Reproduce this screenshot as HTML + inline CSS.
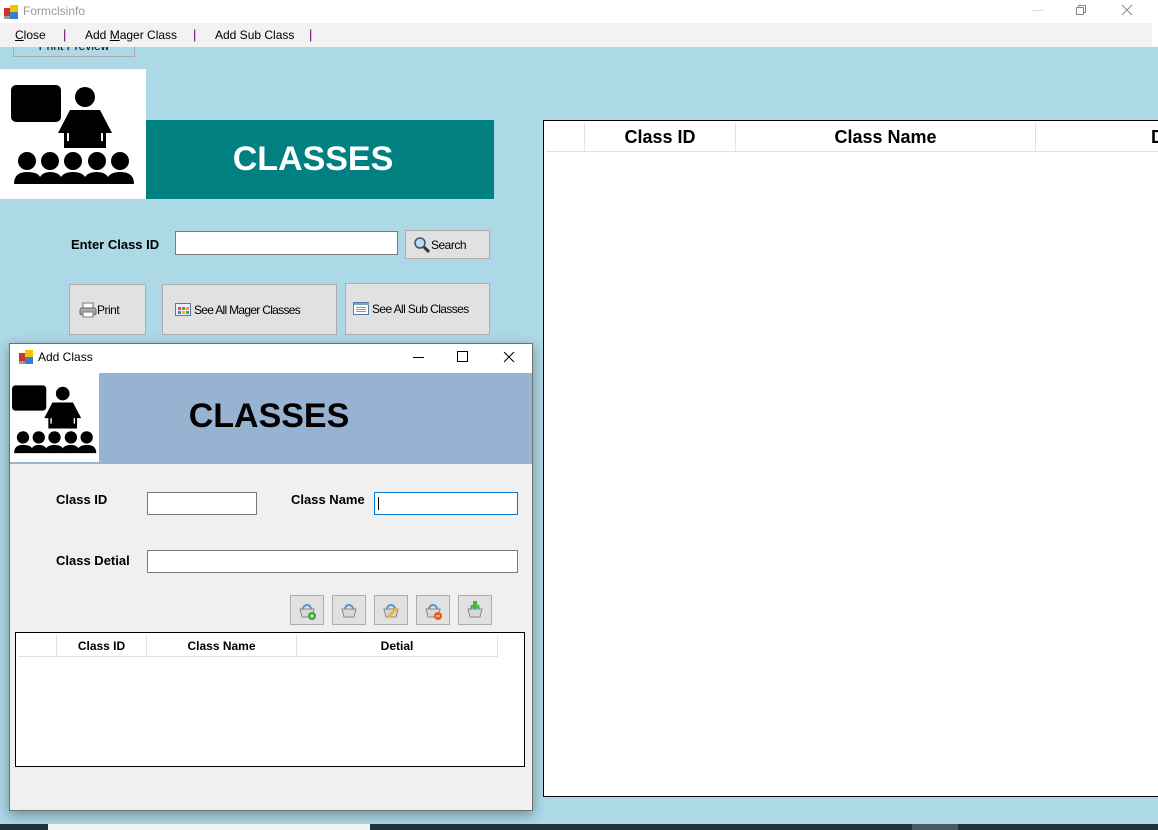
<!DOCTYPE html>
<html><head><meta charset="utf-8">
<style>
*{margin:0;padding:0;box-sizing:border-box}
body{width:1158px;height:830px;overflow:hidden;background:#add8e6;position:relative;font-family:"Liberation Sans",sans-serif}
.a{position:absolute}
.btn{position:absolute;background:#e1e1e1;border:1px solid #adadad;font-size:12px;color:#000;display:flex;align-items:center;letter-spacing:-0.5px}
.tb{position:absolute;background:#fff;border:1px solid #7a7a7a}
.lbl{position:absolute;font-weight:bold;font-size:13px;color:#000}
.hd{position:absolute;top:0;height:100%;border-right:1px solid #e3e3e3;font-weight:bold;display:flex;align-items:center;justify-content:center}
</style></head><body>
<svg width="0" height="0" style="position:absolute">
<defs>
<g id="ic">
<rect x="11" y="16" width="50" height="37" rx="5" fill="#000"/>
<circle cx="85" cy="28" r="10" fill="#000"/>
<path d="M70 41 H100 L112 64 H106 V79 H64 V64 H58 Z" fill="#000"/>
<path d="M68 64 V72 M102 64 V72" stroke="#fff" stroke-width="2"/>
<g fill="#000">
<circle cx="27" cy="92" r="9"/><circle cx="50" cy="92" r="9"/><circle cx="73" cy="92" r="9"/><circle cx="97" cy="92" r="9"/><circle cx="120" cy="92" r="9"/>
<path d="M14 115 Q14 103 27 103 Q38 103 40 108 Q43 103 50 103 Q58 103 61 108 Q64 103 73 103 Q82 103 85 108 Q88 103 97 103 Q105 103 108 108 Q111 103 120 103 Q134 103 134 115 Z"/>
</g>
</g>
<g id="bk"><path d="M3 9 H17 L15 17 H5 Z" fill="#d8d8d8" stroke="#888" stroke-width="1"/><path d="M6 9 A4 4 0 0 1 14 9" fill="none" stroke="#5a8fc8" stroke-width="2"/></g>
</defs></svg>

<!-- title bar -->
<div class="a" style="left:0;top:0;width:1158px;height:23px;background:#fff"></div>
<svg class="a" style="left:3px;top:4px" width="16" height="16"><rect x="1" y="4" width="7" height="8" fill="#c33"/><rect x="7" y="1" width="8" height="7" fill="#f5c400"/><rect x="7" y="8" width="8" height="7" fill="#3a7bd5"/><rect x="1" y="12" width="6" height="3" fill="#999"/></svg>
<div class="a" style="left:23px;top:4px;font-size:12px;color:#999">Formclsinfo</div>
<div class="a" style="left:1031px;top:10px;width:12px;height:1px;background:#ddd"></div>
<svg class="a" style="left:1075px;top:4px" width="12" height="12"><rect x="1.5" y="3.5" width="7" height="7" fill="none" stroke="#888"/><path d="M3.5 3.5 V1.5 H10.5 V8.5 H8.5" fill="none" stroke="#888"/></svg>
<svg class="a" style="left:1121px;top:4px" width="12" height="12"><path d="M1 1 L11 11 M11 1 L1 11" stroke="#888"/></svg>
<!-- menu -->
<div class="a" style="left:0;top:23px;width:1152px;height:24px;background:#f2f2f2"></div>
<div class="a" style="left:1152px;top:23px;width:6px;height:24px;background:#fff"></div>
<div class="a" style="left:13px;top:47px;width:122px;height:10px;border:1px solid #aaa;border-top:none;background:#add8e6;overflow:hidden"><div style="font-size:12px;margin-top:-8px;text-align:center">Print Preview</div></div>
<div class="a" style="left:15px;top:28px;font-size:12px"><u>C</u>lose</div>
<div class="a" style="left:63px;top:27px;font-size:13px;color:#606">|</div>
<div class="a" style="left:85px;top:28px;font-size:12px">Add <u>M</u>ager Class</div>
<div class="a" style="left:193px;top:27px;font-size:13px;color:#606">|</div>
<div class="a" style="left:215px;top:28px;font-size:12px">Add Sub Class</div>
<div class="a" style="left:309px;top:27px;font-size:13px;color:#606">|</div>

<!-- main header -->
<div class="a" style="left:0;top:69px;width:146px;height:130px;background:#fff"></div>
<svg class="a" style="left:0;top:69px" width="146" height="130" viewBox="0 0 146 130"><use href="#ic"/></svg>
<div class="a" style="left:146px;top:120px;width:348px;height:79px;background:#008080;color:#fff;font-weight:bold;font-size:34px;display:flex;align-items:center;justify-content:center;padding-right:14px">CLASSES</div>

<div class="lbl" style="left:71px;top:237px">Enter Class ID</div>
<div class="tb" style="left:175px;top:231px;width:223px;height:24px"></div>
<div class="btn" style="left:405px;top:230px;width:85px;height:29px;padding-left:7px"><svg width="18" height="18"><circle cx="7" cy="7" r="5" fill="#bde" stroke="#357" stroke-width="1.5"/><path d="M11 11 L16 16" stroke="#333" stroke-width="3"/></svg>Search</div>
<div class="btn" style="left:69px;top:284px;width:77px;height:51px;padding-left:9px"><svg width="18" height="16"><rect x="4" y="1" width="10" height="6" fill="#fff" stroke="#777"/><rect x="1" y="6" width="16" height="7" rx="2" fill="#aaa" stroke="#666"/><rect x="4" y="10" width="10" height="5" fill="#fff" stroke="#777"/></svg>Print</div>
<div class="btn" style="left:162px;top:284px;width:175px;height:51px;padding-left:12px;letter-spacing:-0.7px"><svg width="17" height="14" style="margin-right:2px"><rect x="0.5" y="0.5" width="15" height="12" fill="#eef" stroke="#57a"/><rect x="3" y="4" width="3" height="3" fill="#e44"/><rect x="7" y="4" width="3" height="3" fill="#4a4"/><rect x="11" y="4" width="3" height="3" fill="#f90"/><rect x="3" y="8" width="3" height="3" fill="#48c"/><rect x="7" y="8" width="3" height="3" fill="#e9c000"/><rect x="11" y="8" width="3" height="3" fill="#4a4"/></svg>See All Mager Classes</div>
<div class="btn" style="left:345px;top:283px;width:145px;height:52px;padding-left:7px;letter-spacing:-0.6px"><svg width="17" height="14" style="margin-right:2px"><rect x="0.5" y="0.5" width="15" height="12" fill="#fff" stroke="#57a"/><rect x="1" y="1" width="15" height="2" fill="#7ab"/><path d="M3 5.5H13M3 7.5H13M3 9.5H13" stroke="#89b"/></svg>See All Sub Classes</div>

<!-- big grid -->
<div class="a" style="left:543px;top:120px;width:615px;height:677px;background:#fff;border:1px solid #000;border-right:none;overflow:hidden">
 <div class="a" style="left:2px;top:2px;width:613px;height:29px;border-bottom:1px solid #e3e3e3;font-size:18px">
  <div class="hd" style="left:0;width:39px"></div>
  <div class="hd" style="left:39px;width:151px">Class ID</div>
  <div class="hd" style="left:190px;width:300px">Class Name</div>
  <div class="a" style="left:605px;top:4px;font-weight:bold">D</div>
 </div>
</div>

<!-- dialog -->
<div class="a" style="left:9px;top:343px;width:524px;height:468px;background:#f0f0f0;border:1px solid #707070;box-shadow:0 4px 12px rgba(0,0,0,.35)"></div>
<div class="a" style="left:10px;top:344px;width:522px;height:29px;background:#fff"></div>
<svg class="a" style="left:18px;top:349px" width="16" height="16"><rect x="1" y="4" width="7" height="8" fill="#c33"/><rect x="7" y="1" width="8" height="7" fill="#f5c400"/><rect x="7" y="8" width="8" height="7" fill="#3a7bd5"/><rect x="1" y="12" width="6" height="3" fill="#999"/></svg>
<div class="a" style="left:38px;top:350px;font-size:12px">Add Class</div>
<div class="a" style="left:413px;top:357px;width:11px;height:1px;background:#000"></div>
<div class="a" style="left:457px;top:351px;width:11px;height:11px;border:1px solid #000"></div>
<svg class="a" style="left:503px;top:351px" width="12" height="12"><path d="M1 1L11 11M11 1L1 11" stroke="#000"/></svg>
<div class="a" style="left:10px;top:373px;width:522px;height:91px;background:#98b3d1"></div>
<div class="a" style="left:10px;top:373px;width:89px;height:89px;background:#fff"></div>
<svg class="a" style="left:10px;top:373px" width="89" height="89" viewBox="8 -2 130 130"><use href="#ic"/></svg>
<div class="a" style="left:99px;top:397px;width:340px;text-align:center;font-weight:bold;font-size:34px;color:#000">CLASSES</div>

<div class="lbl" style="left:56px;top:492px">Class ID</div>
<div class="tb" style="left:147px;top:492px;width:110px;height:23px"></div>
<div class="lbl" style="left:291px;top:492px">Class Name</div>
<div class="tb" style="left:374px;top:492px;width:144px;height:23px;border-color:#0078d7"><div style="position:absolute;left:3px;top:4px;width:1px;height:13px;background:#000"></div></div>
<div class="lbl" style="left:56px;top:553px">Class Detial</div>
<div class="tb" style="left:147px;top:550px;width:371px;height:23px"></div>

<div class="btn" style="left:290px;top:595px;width:34px;height:30px;justify-content:center"><svg width="20" height="20"><use href="#bk"/><circle cx="15" cy="16" r="4" fill="#3a3"/><path d="M13 16h4M15 14v4" stroke="#fff"/></svg></div>
<div class="btn" style="left:332px;top:595px;width:34px;height:30px;justify-content:center"><svg width="20" height="20"><use href="#bk"/></svg></div>
<div class="btn" style="left:374px;top:595px;width:34px;height:30px;justify-content:center"><svg width="20" height="20"><use href="#bk"/><path d="M7 17 L16 8" stroke="#e8b830" stroke-width="3"/></svg></div>
<div class="btn" style="left:416px;top:595px;width:34px;height:30px;justify-content:center"><svg width="20" height="20"><use href="#bk"/><circle cx="15" cy="16" r="4" fill="#e55a1a"/><path d="M13 16h4" stroke="#fff"/></svg></div>
<div class="btn" style="left:458px;top:595px;width:34px;height:30px;justify-content:center"><svg width="20" height="20"><use href="#bk"/><path d="M8 1h4v4h3l-5 5-5-5h3z" fill="#4b3"/></svg></div>

<div class="a" style="left:15px;top:632px;width:510px;height:135px;background:#fff;border:1px solid #000">
 <div class="a" style="left:2px;top:2px;width:480px;height:22px;border-bottom:1px solid #e3e3e3;font-size:12px">
  <div class="hd" style="left:0;width:39px"></div>
  <div class="hd" style="left:39px;width:90px">Class ID</div>
  <div class="hd" style="left:129px;width:150px">Class Name</div>
  <div class="hd" style="left:279px;width:201px">Detial</div>
 </div>
</div>

<!-- taskbar -->
<div class="a" style="left:0;top:824px;width:1158px;height:6px;background:#1f323d"></div>
<div class="a" style="left:48px;top:824px;width:322px;height:6px;background:#f2f2f2"></div>
<div class="a" style="left:912px;top:824px;width:46px;height:6px;background:#4a5866"></div>
</body></html>
